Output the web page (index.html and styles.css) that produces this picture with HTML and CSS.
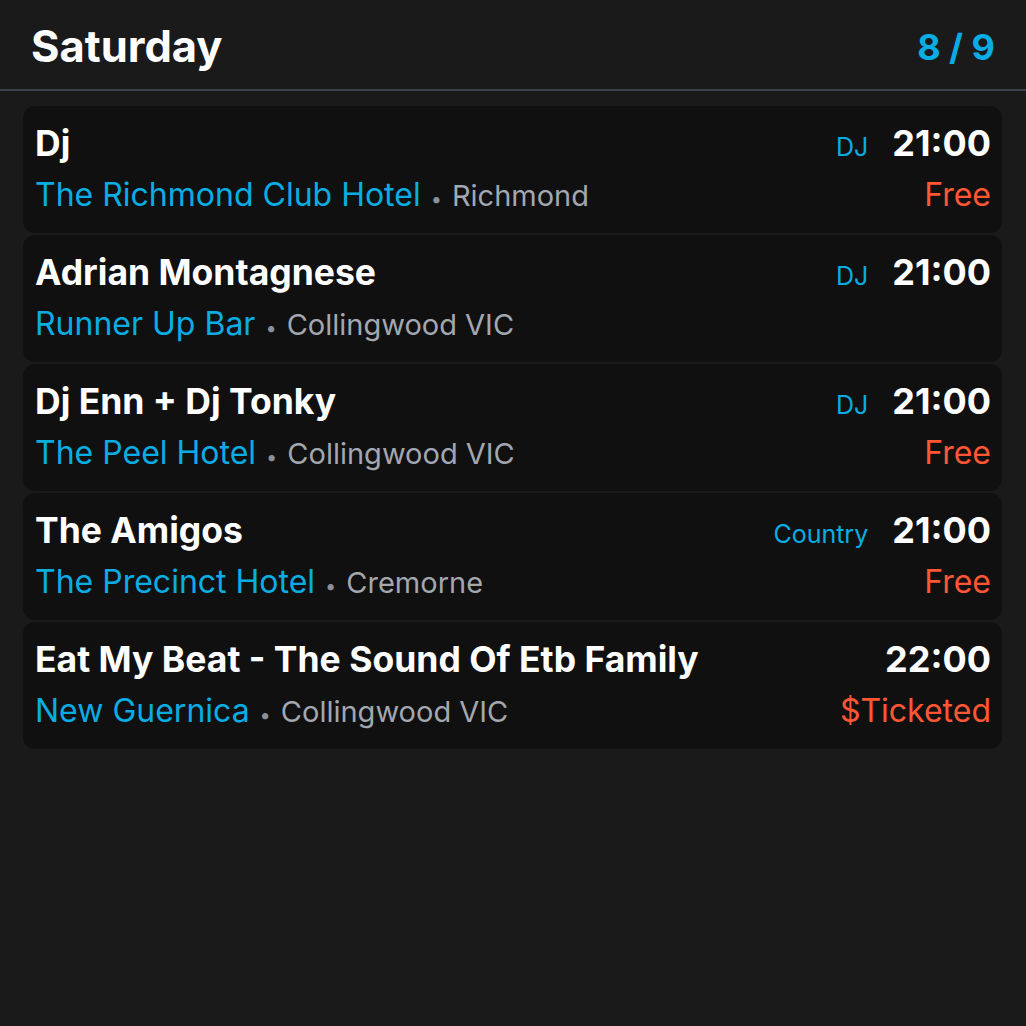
FILE: index.html
```html
<!DOCTYPE html>
<html lang="en">
<head>
<meta charset="utf-8">
<title>Saturday</title>
<link rel="stylesheet" href="styles.css">
</head>
<body>
<header class="day-header">
  <h1 class="day-title">Saturday</h1>
  <span class="day-count">8 / 9</span>
</header>
<main class="list">
  <article class="card">
    <div class="row">
      <span class="title">Dj</span>
      <div class="meta"><span class="tag">DJ</span><span class="time">21:00</span></div>
    </div>
    <div class="row">
      <div class="venue"><span class="venue-name">The Richmond Club Hotel</span><span class="dot">•</span><span class="loc">Richmond</span></div>
      <span class="price">Free</span>
    </div>
  </article>
  <article class="card">
    <div class="row">
      <span class="title">Adrian Montagnese</span>
      <div class="meta"><span class="tag">DJ</span><span class="time">21:00</span></div>
    </div>
    <div class="row">
      <div class="venue"><span class="venue-name">Runner Up Bar</span><span class="dot">•</span><span class="loc">Collingwood VIC</span></div>
      <span class="price"></span>
    </div>
  </article>
  <article class="card">
    <div class="row">
      <span class="title">Dj Enn + Dj Tonky</span>
      <div class="meta"><span class="tag">DJ</span><span class="time">21:00</span></div>
    </div>
    <div class="row">
      <div class="venue"><span class="venue-name">The Peel Hotel</span><span class="dot">•</span><span class="loc">Collingwood VIC</span></div>
      <span class="price">Free</span>
    </div>
  </article>
  <article class="card">
    <div class="row">
      <span class="title">The Amigos</span>
      <div class="meta"><span class="tag">Country</span><span class="time">21:00</span></div>
    </div>
    <div class="row">
      <div class="venue"><span class="venue-name">The Precinct Hotel</span><span class="dot">•</span><span class="loc">Cremorne</span></div>
      <span class="price">Free</span>
    </div>
  </article>
  <article class="card">
    <div class="row">
      <span class="title">Eat My Beat - The Sound Of Etb Family</span>
      <div class="meta"><span class="time">22:00</span></div>
    </div>
    <div class="row">
      <div class="venue"><span class="venue-name">New Guernica</span><span class="dot">•</span><span class="loc">Collingwood VIC</span></div>
      <span class="price">$Ticketed</span>
    </div>
  </article>
</main>
</body>
</html>
```
FILE: styles.css
```css
* { box-sizing: border-box; }
html, body {
  margin: 0;
  padding: 0;
  background: #1a1a1a;
  height: 100%;
}
body {
  font-family: Inter, "Noto Sans", sans-serif;
  color: #ffffff;
}
.day-header {
  display: flex;
  align-items: center;
  justify-content: space-between;
  height: 91px;
  padding: 4px 31px 0 31px;
  border-bottom: 2px solid #3c414c;
}
.day-title {
  margin: 0;
  font-size: 43.5px;
  line-height: 1;
  font-weight: 700;
}
.day-count {
  font-size: 36px;
  line-height: 1;
  font-weight: 700;
  color: #0aade3;
}
.list {
  display: flex;
  flex-direction: column;
  gap: 2px;
  padding: 15px 24px 0 23px;
}
.card {
  background: #101010;
  border-radius: 12px;
  height: 127px;
  padding: 15px 11px 0 12px;
  display: flex;
  flex-direction: column;
  gap: 8px;
}
.row {
  display: flex;
  align-items: baseline;
  justify-content: space-between;
  height: 44px;
}
.title {
  font-size: 35.5px;
  font-weight: 700;
  line-height: 44px;
}
.meta {
  display: flex;
  align-items: baseline;
  gap: 24px;
}
.tag {
  font-size: 25px;
  color: #0aade3;
}
.time {
  font-size: 36px;
  font-weight: 700;
}
.venue {
  display: flex;
  align-items: baseline;
  gap: 10px;
}
.venue-name {
  font-size: 32px;
  color: #0aade3;
  line-height: 44px;
}
.dot {
  font-size: 20px;
  color: #8a8f99;
}
.loc {
  font-size: 29px;
  color: #a3a7b0;
}
.price {
  font-size: 32px;
  color: #ff5633;
}
```
